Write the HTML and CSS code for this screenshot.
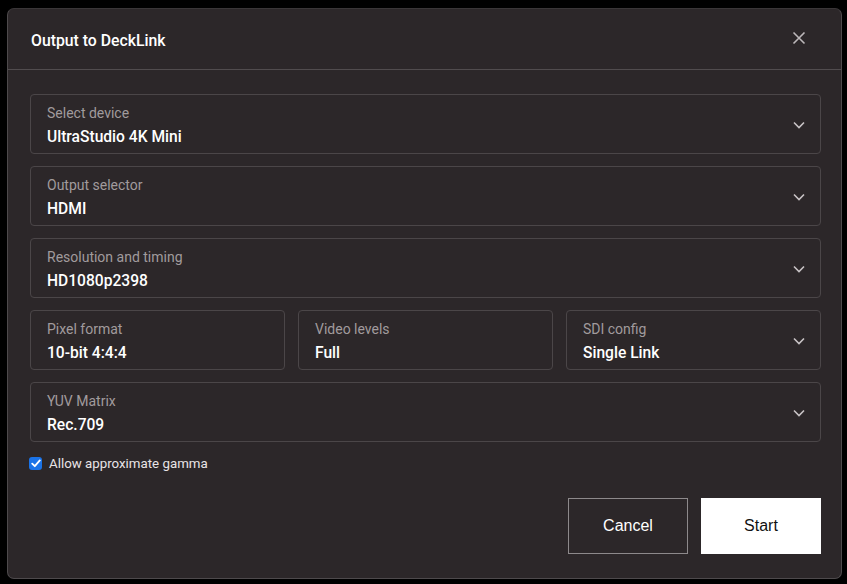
FILE: index.html
```html
<!DOCTYPE html>
<html>
<head>
<meta charset="utf-8">
<link rel="stylesheet" href="styles.css">
</head>
<body>
<div class="dialog">
  <div class="header">
    <div class="title">Output to DeckLink</div>
    <svg class="close" width="14" height="14" viewBox="0 0 14 14"><path d="M1.5 1.5 L12.5 12.5 M12.5 1.5 L1.5 12.5" stroke="#bdb8ba" stroke-width="1.6" fill="none"/></svg>
  </div>
  <div class="body">
    <div class="field">
      <div class="text"><div class="label">Select device</div><div class="value">UltraStudio 4K Mini</div></div>
      <svg class="chev" width="12" height="8" viewBox="0 0 12 8"><path d="M1 1.5 L6 6.5 L11 1.5" stroke="#c8c3c5" stroke-width="1.6" fill="none"/></svg>
    </div>
    <div class="field">
      <div class="text"><div class="label">Output selector</div><div class="value">HDMI</div></div>
      <svg class="chev" width="12" height="8" viewBox="0 0 12 8"><path d="M1 1.5 L6 6.5 L11 1.5" stroke="#c8c3c5" stroke-width="1.6" fill="none"/></svg>
    </div>
    <div class="field">
      <div class="text"><div class="label">Resolution and timing</div><div class="value">HD1080p2398</div></div>
      <svg class="chev" width="12" height="8" viewBox="0 0 12 8"><path d="M1 1.5 L6 6.5 L11 1.5" stroke="#c8c3c5" stroke-width="1.6" fill="none"/></svg>
    </div>
    <div class="row3">
      <div class="field">
        <div class="text"><div class="label">Pixel format</div><div class="value">10-bit 4:4:4</div></div>
      </div>
      <div class="field">
        <div class="text"><div class="label">Video levels</div><div class="value">Full</div></div>
      </div>
      <div class="field">
        <div class="text"><div class="label">SDI config</div><div class="value">Single Link</div></div>
        <svg class="chev" width="12" height="8" viewBox="0 0 12 8"><path d="M1 1.5 L6 6.5 L11 1.5" stroke="#c8c3c5" stroke-width="1.6" fill="none"/></svg>
      </div>
    </div>
    <div class="field">
      <div class="text"><div class="label">YUV Matrix</div><div class="value">Rec.709</div></div>
      <svg class="chev" width="12" height="8" viewBox="0 0 12 8"><path d="M1 1.5 L6 6.5 L11 1.5" stroke="#c8c3c5" stroke-width="1.6" fill="none"/></svg>
    </div>
    <label class="check">
      <span class="box"><svg width="10" height="9" viewBox="0 0 10 9"><path d="M1.2 4.6 L3.8 7.2 L8.8 1.4" stroke="#fff" stroke-width="1.8" fill="none" stroke-linecap="round" stroke-linejoin="round"/></svg></span>
      <span>Allow approximate gamma</span>
    </label>
    <div class="actions">
      <div class="btn cancel">Cancel</div>
      <div class="btn start">Start</div>
    </div>
  </div>
</div>
</body>
</html>
```
FILE: styles.css
```css
html, body {
  margin: 0;
  padding: 0;
  background: #000;
}
body {
  width: 847px;
  height: 584px;
  padding: 8px 0 0 7px;
  box-sizing: border-box;
  font-family: Roboto, "Liberation Sans", sans-serif;
}
.dialog {
  width: 835px;
  height: 571px;
  box-sizing: border-box;
  background: #2c2729;
  border: 1px solid #4e4a4c;
  border-top-color: #3a3638;
  border-radius: 7px;
  display: flex;
  flex-direction: column;
}
.header {
  height: 61px;
  box-sizing: border-box;
  border-bottom: 1px solid #514c4e;
  display: flex;
  align-items: center;
  justify-content: space-between;
  padding: 0 35px 0 23px;
}
.title {
  color: #fff;
  font-size: 15.8px;
  font-weight: 500;
  margin-top: 2px;
}
.close {
  margin-top: -3px;
}
.body {
  padding: 24px 20px 0 22px;
  display: flex;
  flex-direction: column;
  gap: 12px;
}
.field {
  height: 60px;
  box-sizing: border-box;
  border: 1px solid #4b4648;
  border-radius: 4px;
  display: flex;
  align-items: center;
  justify-content: space-between;
  padding: 0 15px 0 16px;
}
.text {
  display: flex;
  flex-direction: column;
  gap: 7px;
  margin-top: 4px;
}
.label {
  color: #a19b9d;
  font-size: 14px;
  line-height: 16px;
}
.value {
  color: #fff;
  font-size: 15.6px;
  font-weight: 500;
  line-height: 19px;
}
.chev {
  margin-top: 2px;
}
.row3 {
  display: grid;
  grid-template-columns: 1fr 1fr 1fr;
  gap: 13px;
}
.check {
  display: flex;
  align-items: center;
  gap: 7px;
  color: #e8e4e6;
  font-size: 13.3px;
  margin-top: 2px;
  margin-left: -1px;
}
.box {
  width: 13px;
  height: 13px;
  border-radius: 3px;
  background: #1a73e8;
  display: flex;
  align-items: center;
  justify-content: center;
}
.actions {
  display: flex;
  justify-content: flex-end;
  gap: 13px;
  margin-top: 15px;
}
.btn {
  width: 120px;
  height: 56px;
  box-sizing: border-box;
  display: flex;
  align-items: center;
  justify-content: center;
  font-family: "Liberation Sans", Arial, sans-serif;
  font-size: 16px;
}
.cancel {
  border: 1px solid #8d898b;
  color: #fff;
}
.start {
  background: #fff;
  color: #111;
}
```
